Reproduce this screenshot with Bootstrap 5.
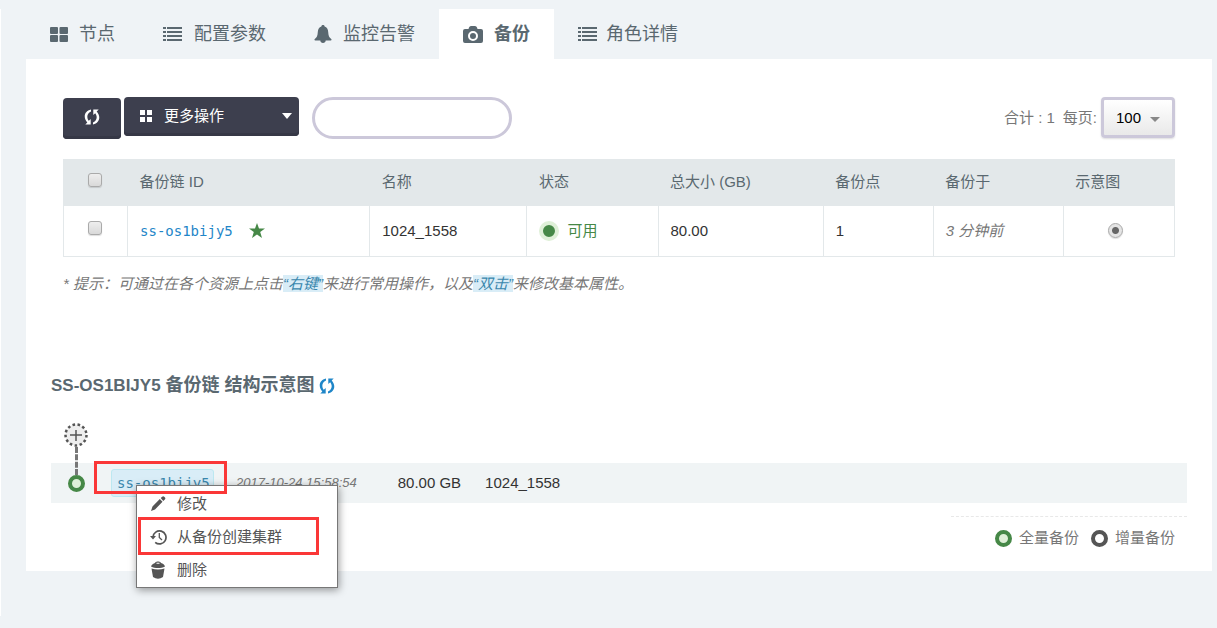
<!DOCTYPE html>
<html lang="zh-CN">
<head>
<meta charset="utf-8">
<meta name="viewport" content="width=device-width, initial-scale=1">
<title>备份</title>
<link rel="stylesheet" href="https://cdn.jsdelivr.net/npm/bootstrap@5.3.0/dist/css/bootstrap.min.css">
<style>
body{background:#eff3f6;color:#333;font:15px/20px "Liberation Sans","Noto Sans CJK SC",sans-serif}
svg{display:block;fill:currentColor;flex:none}
.page-shell{margin:9px 0 12px;padding:0 5px 45px 25px;border-left:1px solid #fff}
.main-tabs{--bs-nav-link-padding-x:24px;--bs-nav-link-padding-y:0;--bs-nav-link-color:#5a6870;--bs-nav-link-hover-color:#5a6870}
.main-tabs .nav-link{display:flex;align-items:center;gap:11px;height:50px;font-size:18px;line-height:24px}
.main-tabs .nav-link.tight{gap:8px}
.main-tabs .nav-link.active{background:#fff;color:#5a6870;font-weight:700}
.panel{background:#fff;padding:38px 25px 23px}
.inset-x{padding:0 12px}
.toolbar{height:42px}
.btn-ink{--bs-btn-color:#fff;--bs-btn-bg:#3d3f4e;--bs-btn-hover-color:#fff;--bs-btn-hover-bg:#343643;--bs-btn-border-radius:4px;border:0;box-shadow:inset 0 -3px #363846;line-height:20px}
.btn-refresh{width:58px;height:41px;display:flex;align-items:center;justify-content:center;padding:0 0 4px}
.btn-more{width:175px;height:39px;margin-left:3px;padding:0 7px 2px 16px;font-size:15px}
.search-box{width:200px;height:42px;border:3px solid #ccc8da;border-radius:21px;margin-left:13px}
.pager{color:#777}
.page-size{position:relative}
.page-size select{appearance:none;width:74px;height:41px;padding:0 0 0 12px;border:3px solid #ccc8da;border-radius:4px;background:linear-gradient(#fff,#e9e9e9);box-shadow:0 1px 2px #0002;color:#000}
.page-size svg{position:absolute;right:15px;top:20px;color:#888;pointer-events:none}
.grid-table{table-layout:fixed;margin:20px 0 0;--bs-table-color:#333;--bs-table-border-color:#e3e8ea;border:1px solid #e3e8ea}
.grid-table th{height:46px;padding:0 12px 1px;background:#e3e8ea;color:#5a6870;font-weight:400;border:0;vertical-align:middle}
.grid-table td{height:51px;padding:0 12px;border:solid #e3e8ea;border-width:0 1px 0 0;vertical-align:middle}
.grid-table td:last-child{border-right:0}
.grid-table .pick{padding:0 2px 8px 0;text-align:center}
.grid-table td.radio-cell{padding:0 18px 2px 12px;text-align:center}
.grid-table input{appearance:none;display:inline-block;width:14px;height:14px;margin:0;border:1px solid #aaa;border-radius:3px;background:linear-gradient(#eee,#d9d9d9);box-shadow:0 1px 1px #0002;vertical-align:middle}
.grid-table input[type=radio]{width:15px;height:15px;border-radius:50%;background:radial-gradient(circle,#666 0 3px,#e4e4e4 4px)}
.mono{font-family:"DejaVu Sans Mono",monospace;font-size:14px}
a.res-id{color:#1f86c8;text-decoration:none}
.ok-text{color:#468847}
.dot{width:20px;height:20px;border-radius:50%;background:#468847;border:4px solid #dff0d8}
.muted{color:#777}
.hint{margin:17px 0 0}
.hint span{background:#d9edf7;color:#3a87ad}
.chain-title{margin:79px 0 0;font-size:18px;line-height:24px;font-weight:700;color:#5a6870;display:flex;align-items:center}
.chain-title .chain-id{font-size:17px}
.chain-title button{padding:0;border:0;background:none;color:#1f86c8;margin-left:4px}
.add-node{display:block;position:relative;width:24px;height:24px;margin:25px 0 16px 13px;padding:0;border:0;background:none;color:#555}
.add-node::after{content:"";position:absolute;left:11px;top:24px;height:28px;border-left:3px dashed #777}
.chain-row{display:flex;align-items:center;height:40px;padding-left:17px;background:#f0f4f5}
.ring{width:17px;height:17px;border-radius:50%;border:4px solid #468847;background:#dff0d8;flex:none}
.ring.incr{border-color:#555;background:#fff}
.tag-wrap{position:relative;margin:0 22px 0 26px}
.tag-wrap .res-tag{display:block;width:103px;height:28px;line-height:26px;padding-left:5px;border:1px solid #bce8f1;border-radius:3px;background:#d9edf7;color:#3a87ad;text-decoration:none}
.stamp{font-size:13px;margin-right:41px}
.callout{position:absolute;border:3px solid #fa3737;pointer-events:none;z-index:3}
.callout-tag{left:-17px;top:-8px;width:133px;height:33px}
.callout-item{left:1px;right:18px;top:31px;height:38px}
.ctx-menu{position:absolute;left:25px;top:16px;width:202px;padding:1px 0;background:#fff;border:1px solid #777;box-shadow:1px 2px 8px #0006;z-index:2;margin:0;list-style:none}
.ctx-menu button{display:flex;align-items:center;gap:10px;width:100%;height:33px;padding:0 0 0 13px;border:0;background:none;color:#555}
.legend-bar{width:236px;margin:13px 0 0 auto;padding:11px 12px 0 0;border-top:1px dashed #e8e8e8;color:#777;display:flex;justify-content:flex-end;gap:12px}
.legend-bar span{display:flex;align-items:center;gap:7px}
</style>
</head>
<body>
<svg class="d-none">
  <symbol id="i-grid" viewBox="0 0 18 15"><rect width="8" height="7" rx="1"/><rect x="9.500" width="8.500" height="7" rx="1"/><rect y="8" width="8" height="7" rx="1"/><rect x="9.500" y="8" width="8.500" height="7" rx="1"/></symbol>
  <symbol id="i-list" viewBox="0 0 20 14"><path d="M0 0h3v2H0zM4 0h15v2H4zM0 4h3v2H0zM4 4h15v2H4zM0 8h3v2H0zM4 8h15v2H4zM0 12h3v2H0zM4 12h15v2H4z"/></symbol>
  <symbol id="i-bell" viewBox="0 0 18 18"><path d="M9 0c1 0 1.600.6 1.600 1.400C13 2 14 4 14.200 7c.2 4 1 5.500 3 7 .7.7.4 1.500-.5 1.500h-5c0 1.500-1.200 2.500-2.700 2.500s-2.700-1-2.700-2.500h-5c-.9 0-1.200-.8-.5-1.500 2-1.500 2.800-3 3-7C4 4 5 2 7.400 1.400 7.400.6 8 0 9 0z"/></symbol>
  <symbol id="i-camera" viewBox="0 0 20 17"><path fill-rule="evenodd" d="M6 1.500Q6.500 0 8 0h4q1.500 0 2 1.500l.5 1.500H18q2 0 2 2v10q0 2-2 2H2q-2 0-2-2V5q0-2 2-2h3.500zM10 5a5 5 0 1 0 0 10 5 5 0 0 0 0-10zm0 2a3 3 0 1 1 0 6 3 3 0 0 1 0-6z"/></symbol>
  <symbol id="i-sync" viewBox="0 0 16 16"><path d="M7 .5v2C2.800 4 2.400 9 4.800 11.800L6.700 10v5.500H1.300l2-2C-1 9 0 2 7 .5zM9 15.500v-2C13.200 12 13.600 7 11.200 4.200L9.300 6V.5h5.400l-2 2C17 7 16 14 9 15.500z"/></symbol>
</svg>

<div class="page-shell">
  <ul class="nav main-tabs">
    <li class="nav-item"><a class="nav-link" href="#"><svg width="18" height="15"><use href="#i-grid"/></svg>节点</a></li>
    <li class="nav-item"><a class="nav-link" href="#"><svg width="20" height="14"><use href="#i-list"/></svg>配置参数</a></li>
    <li class="nav-item"><a class="nav-link" href="#"><svg width="18" height="18"><use href="#i-bell"/></svg>监控告警</a></li>
    <li class="nav-item"><a class="nav-link active" href="#" aria-current="page"><svg width="20" height="17"><use href="#i-camera"/></svg>备份</a></li>
    <li class="nav-item"><a class="nav-link tight" href="#"><svg width="20" height="14"><use href="#i-list"/></svg>角色详情</a></li>
  </ul>

  <main class="panel">
    <div class="inset-x">
      <div class="toolbar d-flex align-items-start">
        <button class="btn btn-ink btn-refresh align-self-end" type="button" aria-label="刷新"><svg width="16" height="16"><use href="#i-sync"/></svg></button>
        <button class="btn btn-ink btn-more d-flex align-items-center" type="button"><svg width="12" height="12" viewBox="0 0 12 12"><path d="M0 0h5v5H0zM7 0h5v5H7zM0 7h5v5H0zM7 7h5v5H7z"/></svg><span class="ms-2 ps-1">更多操作</span><svg class="ms-auto" width="10" height="6"><path d="M0 0h10L5 6z"/></svg></button>
        <input class="search-box" type="text" aria-label="搜索">
        <div class="pager d-flex align-items-center ms-auto">
          <span class="me-2">合计 : 1</span>
          <label for="pageSize" class="me-1">每页:</label>
          <span class="page-size"><select id="pageSize"><option>100</option></select><svg width="10" height="5" viewBox="0 0 10 5"><path d="M0 0h10L5 5z"/></svg></span>
        </div>
      </div>

      <table class="table grid-table">
        <colgroup><col style="width:64px"><col style="width:242px"><col style="width:157px"><col style="width:131px"><col style="width:165px"><col style="width:110px"><col style="width:130px"><col style="width:111px"></colgroup>
        <thead>
          <tr><th class="pick"><input type="checkbox" aria-label="全选"></th><th>备份链 ID</th><th>名称</th><th>状态</th><th>总大小 (GB)</th><th>备份点</th><th>备份于</th><th>示意图</th></tr>
        </thead>
        <tbody>
          <tr>
            <td class="pick"><input type="checkbox" aria-label="选择 ss-os1bijy5"></td>
            <td><div class="d-flex align-items-center"><a class="res-id mono" href="#">ss-os1bijy5</a><svg class="ok-text ms-3" width="16" height="15" viewBox="0 0 16 15"><path d="M8 0l2 5.500h6l-4.800 3.600L13 15l-5-3.500L3 15l1.800-5.900L0 5.500h6z"/></svg></div></td>
            <td>1024_1558</td>
            <td><div class="d-flex align-items-center gap-2 ok-text"><span class="dot"></span>可用</div></td>
            <td>80.00</td>
            <td>1</td>
            <td class="muted"><em>3 分钟前</em></td>
            <td class="radio-cell"><input type="radio" name="diagram" checked aria-label="示意图"></td>
          </tr>
        </tbody>
      </table>
      <p class="hint muted"><em>* 提示：可通过在各个资源上点击<span>“右键”</span>来进行常用操作，以及<span>“双击”</span>来修改基本属性。</em></p>
    </div>

    <h2 class="chain-title"><span><span class="chain-id">SS-OS1BIJY5</span> 备份链 结构示意图</span><button type="button" aria-label="刷新示意图"><svg width="16" height="16"><use href="#i-sync"/></svg></button></h2>

    <button class="add-node" type="button" aria-label="新建备份"><svg width="24" height="24" viewBox="0 0 24 24"><circle cx="12" cy="12" r="10.500" fill="#eee" stroke="#555" stroke-width="2.500" stroke-dasharray="2.600 2.470"/><path d="M11.250 7h1.500v4.250H18v1.500h-5.250V18h-1.500v-5.250H6v-1.500h5.250z"/></svg></button>
    <div class="chain-row">
      <span class="ring"></span>
      <div class="tag-wrap">
        <a class="res-tag mono" href="#">ss-os1bijy5</a>
        <div class="callout callout-tag"></div>
        <ul class="ctx-menu">
          <li><button type="button"><svg width="17" height="16" viewBox="0 0 17 16"><path d="M1 15l1.500-4.500L9.800 3l2.700 2.700L5 13.500zM10.700 2.100l1.500-1.400q1-.8 2 0l.8.900q.8 1-.2 1.900l-1.500 1.400z"/></svg>修改</button></li>
          <li><button type="button"><svg width="17" height="16" viewBox="0 0 17 16"><g fill="none" stroke="currentColor"><path stroke-width="1.700" d="M3 8a6.500 6.500 0 1 1 2.200 5.300"/><path stroke-width="1.300" d="M9.300 4v4.500l2.700 2.500"/></g><path d="M0 7h6l-3 3.500z"/></svg>从备份创建集群</button></li>
          <li><button type="button"><svg width="17" height="18" viewBox="0 0 17 18"><path fill-rule="evenodd" d="M1 5.500C1.500 3.500 3.500 2.500 5 2c.5-2 5.500-2 6 0 2 .5 3.500 1.500 4 3.500-4 2-10 2-14 0zM6.500 2.800h3v-1h-3z"/><path d="M1.500 7.500q6.500 2 13 0L13 16q-5 3.500-10 0z"/></svg>删除</button></li>
          <li class="callout callout-item"></li>
        </ul>
      </div>
      <em class="stamp muted">2017-10-24 15:58:54</em>
      <span class="me-4">80.00 GB</span>
      <span>1024_1558</span>
    </div>
    <div class="legend-bar"><span><i class="ring"></i>全量备份</span><span><i class="ring incr"></i>增量备份</span></div>
  </main>
</div>
<script src="https://cdn.jsdelivr.net/npm/bootstrap@5.3.0/dist/js/bootstrap.bundle.min.js"></script>
</body>
</html>
